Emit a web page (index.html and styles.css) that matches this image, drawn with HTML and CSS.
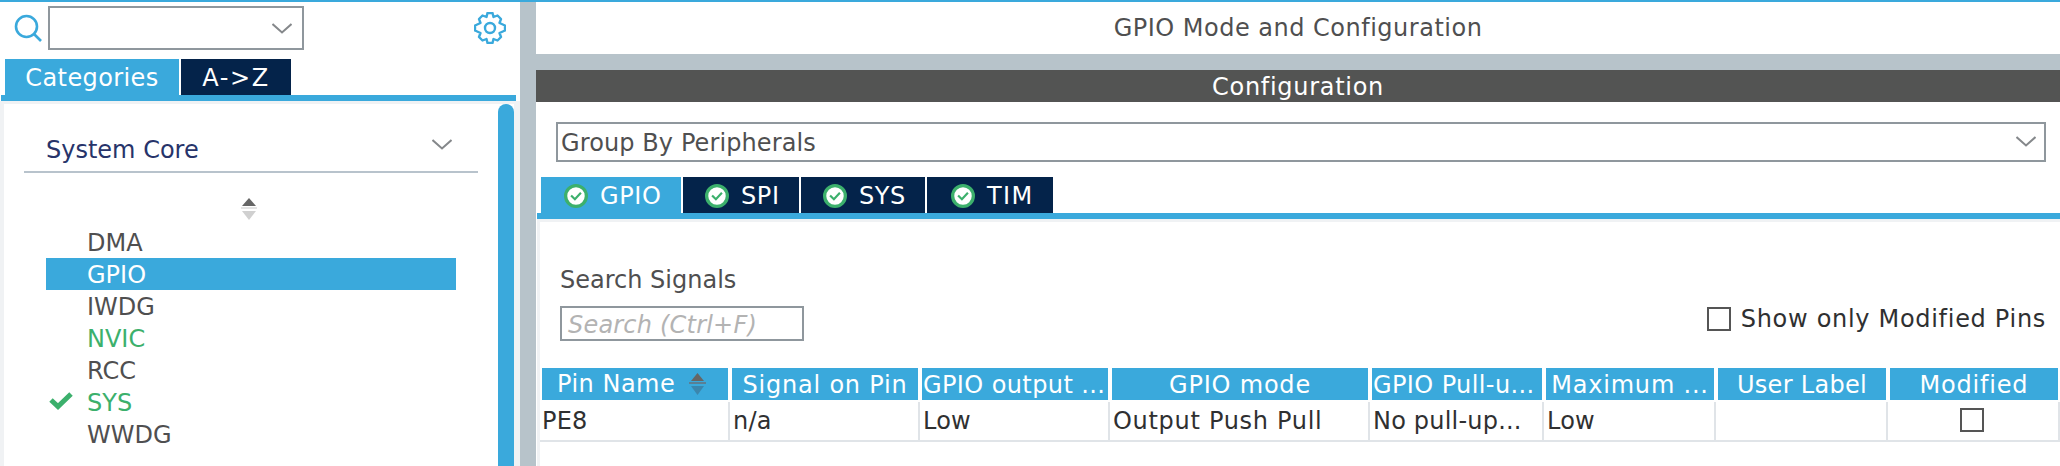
FILE: index.html
```html
<!DOCTYPE html>
<html>
<head>
    <meta charset="utf-8" />
    <title>GPIO Mode and Configuration</title>
    <link rel="stylesheet" href="styles.css">
</head>
<body>
    <div class="app">
        <!-- left: categories -->
        <div class="left">
            <div class="searchRow">
                <svg class="searchIcon" width="28" height="28" viewBox="0 0 28 28">
                    <circle cx="12.5" cy="12.5" r="10.5" fill="none" stroke="#3aa9dc" stroke-width="2.6" />
                    <path d="M20 20 L27 27" fill="none" stroke="#3aa9dc" stroke-width="2.6" />
                </svg>
                <div class="combo">
                    <svg class="chev" width="20" height="11" viewBox="0 0 20 11"><path d="M0.5 1 L10 9.5 L19.5 1" /></svg>
                </div>
                <svg class="gear" width="32" height="32" viewBox="0 0 32 32">
                    <circle cx="16" cy="16" r="5" fill="none" stroke="#3aa9dc" stroke-width="2.4" />
                    <path d="M13.5 1 H18.5 L19.5 5 L23.5 3.5 L27 7 L25.5 11 L31 13.5 V18.5 L25.5 21 L27 25 L23.5 28.500 L19.5 27 L18.5 31 H13.500 L12.5 27 L8.5 28.5 L5 25 L6.5 21 L1 18.5 V13.5 L6.5 11 L5 7 L8.5 3.5 L12.5 5 Z" fill="none" stroke="#3aa9dc" stroke-width="2.4" stroke-linejoin="round" />
                </svg>
            </div>
            <div class="tabs leftTabs">
                <div class="tab on catTab">Categories</div>
                <div class="tab azTab">A-&gt;Z</div>
            </div>
            <div class="panel">
                <div class="catList">
                    <div class="groupHead">
                        <span>System Core</span>
                        <svg class="chev" width="20" height="11" viewBox="0 0 20 11"><path d="M0.5 1 L10 9.5 L19.5 1" /></svg>
                    </div>
                    <div class="sortRow">
                        <svg width="18" height="22" viewBox="0 0 18 22">
                            <path d="M9 0 L16 8 H2 Z" fill="#666" />
                            <path d="M1 9 H17 V11 H1 Z" fill="#e4e4e4" />
                            <path d="M2 13 H16 L9 22 Z" fill="#d0d0d0" />
                        </svg>
                    </div>
                    <div class="item">DMA</div>
                    <div class="item on">GPIO</div>
                    <div class="item">IWDG</div>
                    <div class="item green">NVIC</div>
                    <div class="item">RCC</div>
                    <div class="item green">
                        <svg class="okMark" width="24" height="19" viewBox="0 0 24 19"><path d="M2 9 L9 15.500 L22 3" fill="none" stroke="#3cb06c" stroke-width="5" /></svg>
                        SYS
                    </div>
                    <div class="item">WWDG</div>
                </div>
                <div class="scrollBar"></div>
            </div>
        </div>

        <!-- right: mode and configuration -->
        <div class="right">
            <div class="title">GPIO Mode and Configuration</div>
            <div class="confHead">Configuration</div>
            <div class="groupBy">
                <span>Group By Peripherals</span>
                <svg class="chev" width="20" height="11" viewBox="0 0 20 11"><path d="M0.5 1 L10 9.5 L19.5 1" /></svg>
            </div>
            <div class="tabs rightTabs">
                <div class="tab on t1"><svg class="tick" width="24" height="24" viewBox="0 0 22 22"><circle cx="11" cy="11" r="9.500" fill="#fff" stroke="#3cb06c" stroke-width="3" /><path d="M6.500 10.500 L10 14 L15.500 8" fill="none" stroke="#3cb06c" stroke-width="2" /></svg>GPIO</div>
                <div class="tab t2"><svg class="tick" width="24" height="24" viewBox="0 0 22 22"><circle cx="11" cy="11" r="9.500" fill="#fff" stroke="#3cb06c" stroke-width="3" /><path d="M6.500 10.500 L10 14 L15.500 8" fill="none" stroke="#3cb06c" stroke-width="2" /></svg>SPI</div>
                <div class="tab t3"><svg class="tick" width="24" height="24" viewBox="0 0 22 22"><circle cx="11" cy="11" r="9.500" fill="#fff" stroke="#3cb06c" stroke-width="3" /><path d="M6.500 10.500 L10 14 L15.500 8" fill="none" stroke="#3cb06c" stroke-width="2" /></svg>SYS</div>
                <div class="tab t4"><svg class="tick" width="24" height="24" viewBox="0 0 22 22"><circle cx="11" cy="11" r="9.500" fill="#fff" stroke="#3cb06c" stroke-width="3" /><path d="M6.500 10.500 L10 14 L15.500 8" fill="none" stroke="#3cb06c" stroke-width="2" /></svg>TIM</div>
            </div>
            <div class="content">
                <div class="filterRow">
                    <div class="searchBox">
                        <div class="searchLabel">Search Signals</div>
                        <div class="searchInput">Search (Ctrl+F)</div>
                    </div>
                    <div class="onlyModified"><span class="checkBox"></span>Show only Modified Pins</div>
                </div>
                <div class="grid head">
                    <div class="pinHead">Pin Name
                        <svg width="17" height="22" viewBox="0 0 17 22">
                            <path d="M8.500 0 L15 8 H2 Z" fill="#666" />
                            <path d="M0 9 H17 V11 H0 Z" fill="#5a7f95" />
                            <path d="M2 13 H15 L8.500 22 Z" fill="#3b86ad" />
                        </svg>
                    </div>
                    <div>Signal on Pin</div>
                    <div class="left1">GPIO output ...</div>
                    <div>GPIO mode</div>
                    <div class="left1">GPIO Pull-u...</div>
                    <div>Maximum ...</div>
                    <div class="userHead">User Label</div>
                    <div>Modified</div>
                </div>
                <div class="grid row">
                    <div>PE8</div>
                    <div>n/a</div>
                    <div>Low</div>
                    <div class="wide">Output Push Pull</div>
                    <div>No pull-up...</div>
                    <div>Low</div>
                    <div></div>
                    <div class="mid"><span class="checkBox"></span></div>
                </div>
            </div>
        </div>
    </div>
</body>
</html>
```

FILE: styles.css
```css
* {
    box-sizing: border-box;
}
html, body {
    margin: 0;
    height: 466px;
    overflow: hidden;
    background: #fff;
}
body {
    font-family: "DejaVu Sans", "Liberation Sans", sans-serif;
    font-size: 24px;
    color: #4f4f50;
}
.app {
    display: flex;
    height: 466px;
    border-top: 2px solid #3aa9dc;
    background: #b7c3ca;
}
.chev path {
    fill: none;
    stroke: #85888b;
    stroke-width: 2;
}

/* left */
.left {
    width: 520px;
    margin-right: 16px;
    background: #fff;
    display: flex;
    flex-direction: column;
}
.searchRow {
    height: 57px;
    padding: 4px 14px 0 14px;
    display: flex;
    align-items: flex-start;
}
.searchIcon {
    margin: 8px 6px 0 0;
}
.combo {
    width: 256px;
    height: 44px;
    border: 2px solid #8f979d;
    display: flex;
    align-items: center;
    justify-content: flex-end;
    padding: 0 10px 0 0;
}
.gear {
    margin: 6px 0 0 170px;
}
.tabs {
    display: flex;
    gap: 2px;
    height: 42px;
    border-bottom: 6px solid #3aa9dc;
}
.tab {
    height: 36px;
    padding-top: 1px;
    background: #04234a;
    color: #fff;
    display: flex;
    align-items: center;
    letter-spacing: .6px;
}
.tab.on {
    background: #3aa9dc;
}
.leftTabs {
    padding-left: 4px;
    margin: 0 4px 0 1px;
}
.catTab {
    width: 174px;
    justify-content: center;
    letter-spacing: .4px;
}
.azTab {
    width: 110px;
    justify-content: center;
    letter-spacing: 1.6px;
}
.panel {
    flex: 1;
    display: flex;
    background: #fff;
    border: solid #f0f2f4;
    border-width: 3px 6px 0 4px;
}
.catList {
    flex: 1;
    min-width: 0;
}
.scrollBar {
    width: 16px;
    background: #3aa9dc;
    border-radius: 8px 8px 0 0;
}
.groupHead {
    margin: 0 20px 0 20px;
    height: 69px;
    padding: 31px 26px 0 22px;
    border-bottom: 2px solid #b8c3cc;
    display: flex;
    justify-content: space-between;
    color: #27346a;
    line-height: 30px;
}
.groupHead .chev {
    margin-top: 4px;
}
.sortRow {
    height: 53px;
    padding: 25px 0 0 236px;
}
.sortRow svg {
    display: block;
}
.item {
    position: relative;
    height: 32px;
    line-height: 34px;
    margin-left: 42px;
    width: 410px;
    padding-left: 41px;
}
.item.on {
    background: #3aa9dc;
    color: #fff;
}
.item.green {
    color: #3cb06c;
}
.okMark {
    position: absolute;
    left: 3px;
    top: 5px;
}

/* right */
.right {
    flex: 1;
    min-width: 0;
    background: #fff;
    display: flex;
    flex-direction: column;
}
.title {
    height: 52px;
    line-height: 52px;
    text-align: center;
    background: #fff;
    letter-spacing: .5px;
}
.confHead {
    height: 32px;
    line-height: 34px;
    margin-top: 16px;
    background: #535453;
    color: #fff;
    text-align: center;
    letter-spacing: .7px;
    box-shadow: 0 -16px 0 #b7c3ca;
}
.groupBy {
    height: 40px;
    margin: 20px 14px 15px 20px;
    border: 2px solid #8f979d;
    padding: 2px 8px 0 3px;
    display: flex;
    align-items: center;
    justify-content: space-between;
    letter-spacing: .1px;
}
.groupBy .chev {
    margin-top: -3px;
}
.rightTabs {
    padding-left: 4px;
    margin-left: 1px;
}
.tab .tick {
    margin-right: 12px;
    flex: none;
}
.t1 { width: 140px; padding-left: 23px; }
.t2 { width: 116px; padding-left: 22px; }
.t3 { width: 124px; padding-left: 22px; }
.t4 { width: 126px; padding-left: 24px; letter-spacing: 1.4px; }
.content {
    flex: 1;
    margin-left: 1px;
    border: solid #f0f2f4;
    border-width: 3px 0 0 3px;
    padding: 0;
}
.filterRow {
    height: 146px;
    display: flex;
    justify-content: space-between;
    padding: 43px 14px 0 20px;
}
.searchLabel {
    line-height: 30px;
}
.searchInput {
    width: 244px;
    height: 35px;
    margin-top: 11px;
    border: 2px solid #8f979d;
    padding-left: 6px;
    line-height: 34px;
    font-style: italic;
    color: #b3b3b3;
    letter-spacing: .2px;
}
.onlyModified {
    display: flex;
    align-items: center;
    gap: 10px;
    height: 26px;
    margin-top: 41px;
    color: #2f3031;
    letter-spacing: .7px;
}
.checkBox {
    display: inline-block;
    width: 24px;
    height: 24px;
    border: 2px solid #555;
    background: #fff;
}
.grid {
    display: grid;
    grid-template-columns: 186px 186px 186px 256px 170px 168px 168px 168px;
    column-gap: 4px;
    margin-left: 2px;
}
.head {
    height: 32px;
    line-height: 34px;
    color: #fff;
    text-align: center;
    white-space: nowrap;
    letter-spacing: .8px;
}
.head > div {
    background: #3aa9dc;
    overflow: hidden;
}
.head .left1 {
    text-align: left;
    padding-left: 1px;
    letter-spacing: .4px;
}
.head .userHead {
    letter-spacing: .3px;
}
.pinHead {
    display: flex;
    align-items: center;
    gap: 14px;
    padding-left: 15px;
    letter-spacing: .5px;
}
.row {
    height: 40px;
    margin-top: 2px;
    margin-left: 0;
    padding-left: 1px;
    border-bottom: 2px solid #e0e4e8;
    color: #2f3031;
    line-height: 38px;
    white-space: nowrap;
    width: 1520px;
    grid-template-columns: 187px 186px 186px 256px 170px 168px 168px 168px;
}
.row > div {
    box-shadow: 2px 0 0 #e0e4e8;
    padding-left: 1px;
    letter-spacing: .2px;
}
.row .wide {
    letter-spacing: .7px;
}
.row .mid {
    padding: 6px 0 0 70px;
    line-height: 0;
}
```
